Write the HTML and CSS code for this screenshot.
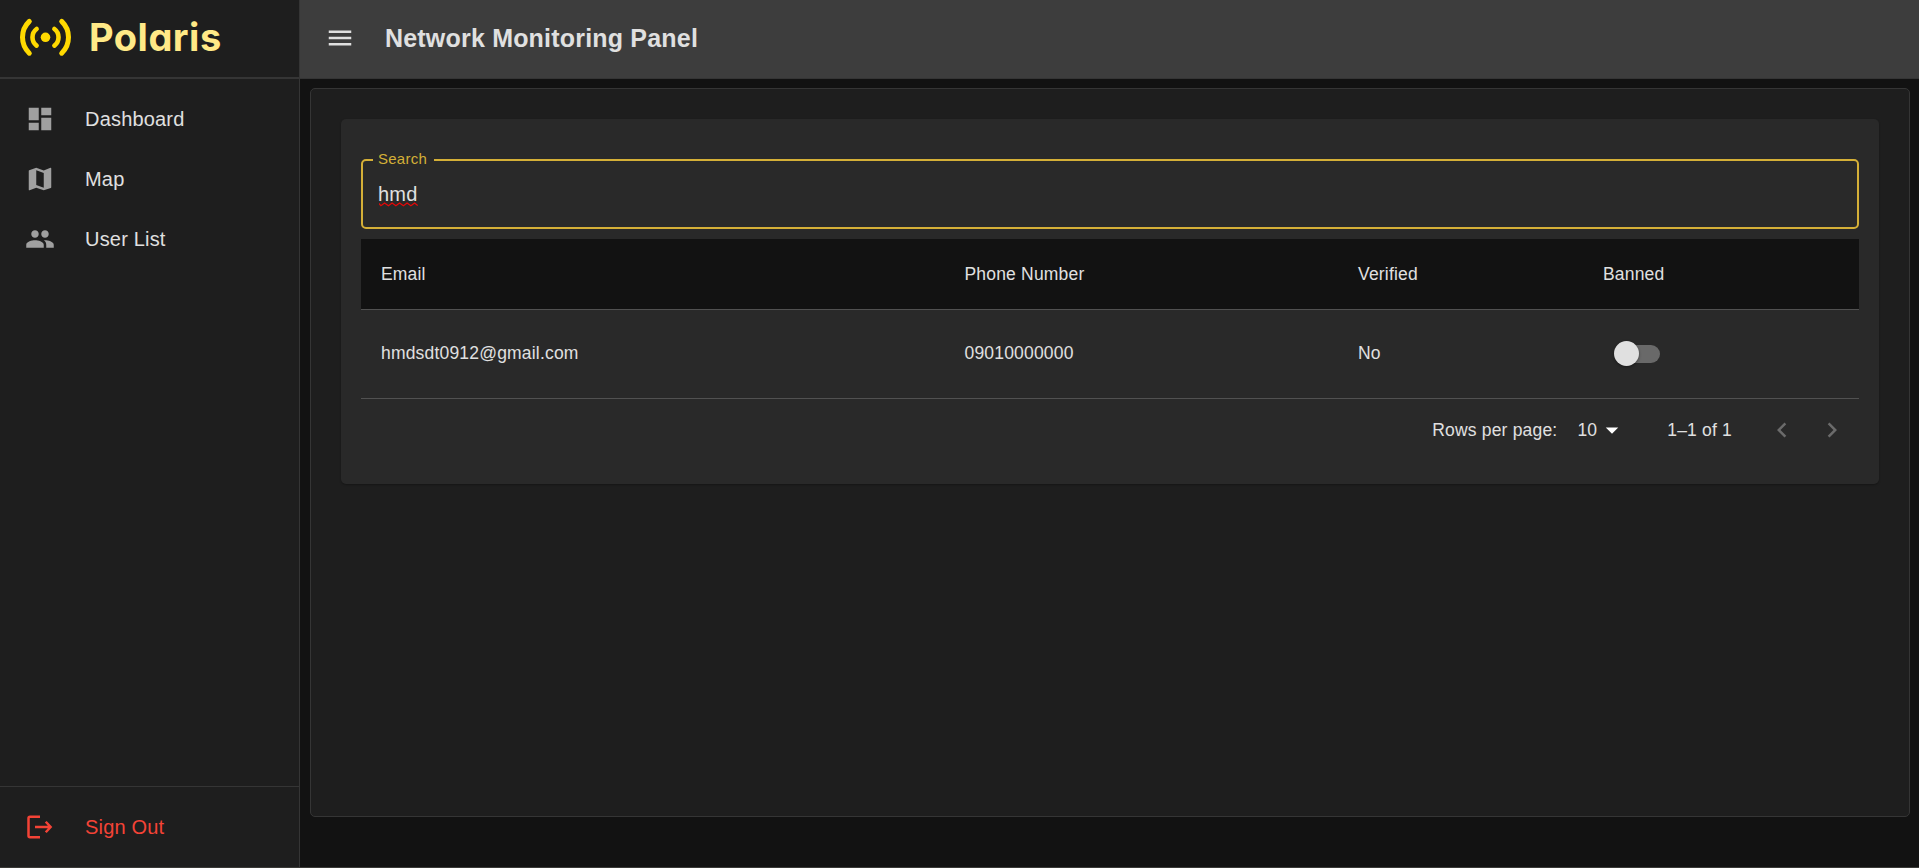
FILE: index.html
```html
<!DOCTYPE html>
<html lang="en">
<head>
<meta charset="utf-8">
<title>Polaris</title>
<link rel="stylesheet" href="styles.css">
</head>
<body>
<div class="app">
  <aside class="sidebar">
    <div class="brand">
      <svg class="brand-icon" viewBox="0 0 53 40" fill="none" stroke="#ffd900" stroke-width="5" stroke-linecap="round">
        <path d="M10.300 4.400A22 22 0 0 0 10.300 36.200M42.700 4.400A22 22 0 0 1 42.700 36.200"/>
        <path d="M17.600 12A10.400 10.400 0 0 0 17.600 28.600M35.400 12A10.400 10.400 0 0 1 35.400 28.600" stroke-width="4.600"/>
        <circle cx="26.500" cy="20.300" r="4.800" fill="#ffd900" stroke="none"/>
      </svg>
      <span class="brand-name">Polaris</span>
    </div>
    <nav class="nav">
      <a class="nav-item"><svg class="icon" viewBox="0 0 24 24"><path d="M3 13h8V3H3v10zm0 8h8v-6H3v6zm10 0h8V11h-8v10zm0-18v6h8V3h-8z"/></svg>Dashboard</a>
      <a class="nav-item"><svg class="icon" viewBox="0 0 24 24"><path d="m20.500 3-.16.030L15 5.100 9 3 3.360 4.900c-.21.070-.36.250-.36.480V20.500c0 .28.220.5.500.5l.16-.03L9 18.900l6 2.100 5.640-1.900c.21-.07.360-.25.360-.48V3.500c0-.28-.22-.5-.5-.5zM15 19l-6-2.110V5l6 2.110V19z"/></svg>Map</a>
      <a class="nav-item"><svg class="icon" viewBox="0 0 24 24"><path d="M16 11c1.660 0 2.990-1.340 2.990-3S17.660 5 16 5c-1.660 0-3 1.340-3 3s1.340 3 3 3zm-8 0c1.660 0 2.990-1.340 2.990-3S9.660 5 8 5C6.340 5 5 6.340 5 8s1.340 3 3 3zm0 2c-2.330 0-7 1.170-7 3.500V19h14v-2.500c0-2.330-4.670-3.500-7-3.500zm8 0c-.29 0-.62.020-.97.050 1.160.84 1.970 1.970 1.970 3.450V19h6v-2.500c0-2.330-4.670-3.500-7-3.500z"/></svg>User List</a>
    </nav>
    <div class="sidebar-foot">
      <a class="nav-item signout"><svg class="icon" viewBox="0 0 24 24" fill="none" stroke="currentColor" stroke-width="2"><path d="M12 3.700H4Q2.800 3.700 2.800 4.900V18.900Q2.800 20.100 4 20.100H12M8 12H20.200M16.600 7.800 20.500 12 16.600 16.200"/></svg>Sign Out</a>
    </div>
  </aside>
  <div class="content">
    <header class="topbar">
      <svg class="icon" viewBox="0 0 24 24"><path d="M3 18h18v-2H3v2zm0-5h18v-2H3v2zm0-7v2h18V6H3z"/></svg>
      <h1 class="title">Network Monitoring Panel</h1>
    </header>
    <main class="panel">
      <section class="card">
        <fieldset class="search">
          <legend class="search-label"><span class="search-text">Search</span></legend>
          <span class="search-value">hmd<svg class="squiggle" viewBox="0 0 39 5"><path d="M0 1.500 1.900 3.700 5.600 1 9.400 3.700 13.100 1 16.900 3.700 20.600 1 24.400 3.700 28.100 1 31.900 3.700 35.600 1 38.700 3.500"/></svg></span>
        </fieldset>
        <div class="row head"><span>Email</span><span>Phone Number</span><span>Verified</span><span>Banned</span></div>
        <div class="row data"><span>hmdsdt0912@gmail.com</span><span>09010000000</span><span>No</span><span class="switch"><i class="track"></i><i class="thumb"></i></span></div>
        <div class="pager">
          <span class="pager-label">Rows per page:</span>
          <span class="pager-size">10</span>
          <svg class="icon caret" viewBox="0 0 24 24"><path d="m7 10 5 5 5-5z"/></svg>
          <span class="pager-range">1–1 of 1</span>
          <span class="pager-btn"><svg class="icon" viewBox="0 0 24 24"><path d="M15.410 16.590 10.830 12l4.580-4.590L14 6l-6 6 6 6z"/></svg></span>
          <span class="pager-btn"><svg class="icon" viewBox="0 0 24 24"><path d="M8.590 16.590 13.170 12 8.590 7.410 10 6l6 6-6 6z"/></svg></span>
        </div>
      </section>
    </main>
  </div>
</div>
</body>
</html>
```

FILE: styles.css
```css
* { box-sizing: border-box; }
body {
  margin: 0;
  background: #121212;
  color: #e0e0e0;
  font-family: "Liberation Sans", Arial, sans-serif;
  font-size: 20px;
}
.app {
  display: flex;
  height: 868px;
  overflow: hidden;
  border-bottom: 1px solid #3b3b38;
}
.icon { width: 30px; height: 30px; flex: none; fill: currentColor; }

.sidebar {
  width: 300px;
  flex: none;
  display: flex;
  flex-direction: column;
  background: #1e1e1e;
  border-right: 1px solid #353535;
}
.brand {
  height: 79px;
  flex: none;
  display: flex;
  align-items: center;
  padding: 0 0 3px 19px;
  border-bottom: 2px solid #353535;
}
.brand-icon { width: 53px; height: 40px; flex: none; }
.brand-name {
  margin-left: 17px;
  color: #ffe987;
  font-family: Inter, sans-serif;
  font-feature-settings: "cv11";
  font-weight: 700;
  font-size: 38px;
  line-height: 50px;
  letter-spacing: 0.5px;
}
.nav { padding-top: 10px; }
.nav-item {
  display: flex;
  align-items: center;
  gap: 30px;
  height: 60px;
  padding-left: 25px;
  line-height: 30px;
  letter-spacing: 0.00938em;
}
.nav-item .icon { color: #a0a0a0; }
.sidebar-foot {
  margin-top: auto;
  height: 81px;
  padding-top: 10px;
  border-top: 1px solid #353535;
}
.nav-item.signout, .nav-item.signout .icon { color: #f44336; }
.signout .icon { fill: none; }

.content { flex: 1; display: flex; flex-direction: column; }
.topbar {
  height: 79px;
  display: flex;
  align-items: center;
  gap: 30px;
  padding: 0 25px 2px;
  background: #3d3d3d;
  border-bottom: 1px solid #353535;
}
.title {
  margin: 0;
  font-size: 25px;
  font-weight: 700;
  line-height: 40px;
  letter-spacing: 0.0078em;
}
.panel {
  height: 729px;
  margin: 9px 9px 0 10px;
  padding: 30px;
  background: #1e1e1e;
  border: 1px solid #353535;
  border-radius: 5px;
}
.card {
  height: 365px;
  padding: 40px 20px 0;
  background: #292929;
  border-radius: 5px;
  box-shadow: 0 1px 2px rgba(0, 0, 0, 0.3);
}
.search {
  height: 76px;
  margin: -6px 0 10px;
  padding: 0 10px;
  border: 2px solid #d4af37;
  border-radius: 5px;
}
.search-label {
  height: 14px;
  padding: 0 7px 0 5px;
  color: #d4af37;
  font-size: 15px;
  line-height: 12px;
}
.search-text { letter-spacing: 0.25px; }
.search-value {
  position: relative;
  display: block;
  width: max-content;
  margin: 12px 5px 0;
  line-height: 30px;
  letter-spacing: 0.19px;
}
/* Spell-check underline below the typed word */
.squiggle {
  position: absolute;
  left: 1px;
  bottom: 2px;
  width: 39px;
  height: 5px;
  fill: none;
  stroke: #e40808;
  stroke-width: 1.3;
}
.row {
  display: grid;
  grid-template-columns: 583.5px 393.5px 245px 1fr;
  align-items: center;
  border-bottom: 1px solid #515151;
  font-size: 17.5px;
  letter-spacing: 0.01071em;
}
.row > span { padding-left: 20px; }
.head { height: 71px; background: #121212; }
.data { height: 89px; padding-bottom: 1px; }
.row > .switch { display: flex; align-items: center; padding-left: 31px; }
.track {
  width: 42px;
  height: 18px;
  margin-left: 4px;
  border-radius: 9px;
  background: #696969;
}
.thumb {
  width: 25px;
  height: 25px;
  margin-left: -46px;
  border-radius: 50%;
  background: #e0e0e0;
  box-shadow: 0 1px 3px rgba(0, 0, 0, 0.4);
}
.pager {
  height: 62px;
  display: flex;
  align-items: center;
  justify-content: flex-end;
  padding-right: 2px;
  font-size: 17.5px;
  letter-spacing: 0.01071em;
}
.pager-size { margin-left: 20px; }
.pager-range { margin: 0 25px 0 40px; }
.caret { color: #fff; }
.pager-btn { display: flex; padding: 10px; color: #6b6b6b; }
```
